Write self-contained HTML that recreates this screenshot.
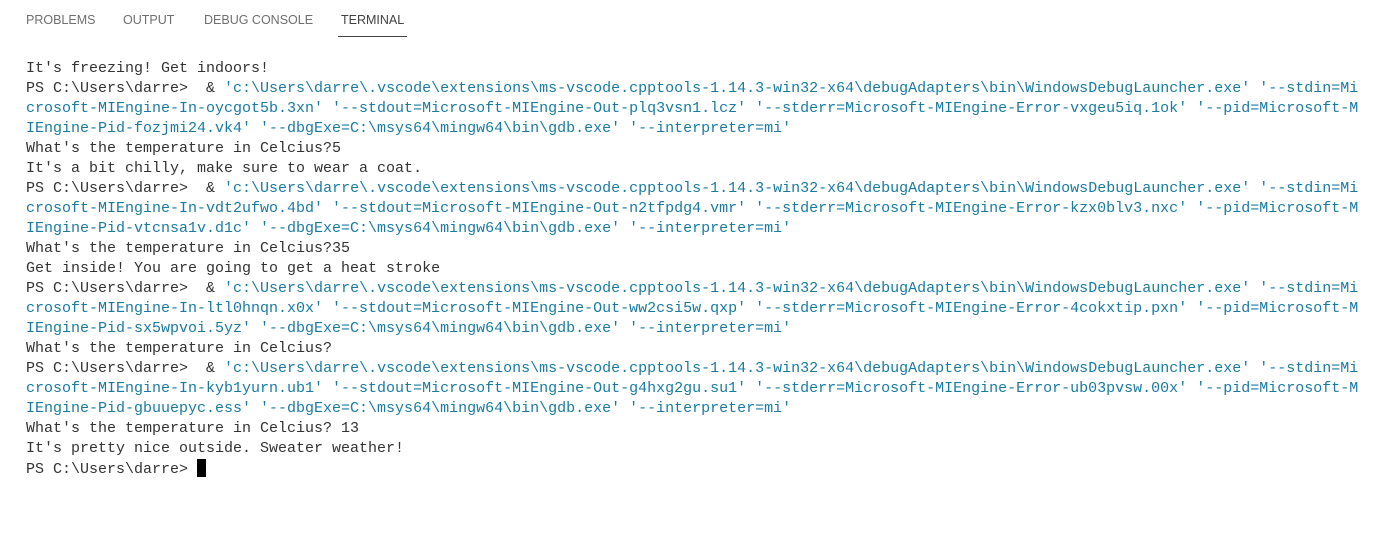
<!DOCTYPE html>
<html><head><meta charset="utf-8"><style>
body{margin:0;width:1375px;height:554px;background:#fff;overflow:hidden}
.tabs{position:absolute;top:0;left:26px;height:40px;font:12.5px "Liberation Sans",sans-serif;color:#6f6f6f}
.tab{position:absolute;top:13px;white-space:nowrap}
.tab.act{color:#424242}
.ul{position:absolute;left:338px;top:36px;width:69px;height:1px;background:#424242}
pre{position:absolute;left:26px;top:59px;margin:0;font:15px/20px "Liberation Mono",monospace;color:#333}
.s{color:#1a7ba0}
.cur{display:inline-block;width:9px;height:18px;background:#000;vertical-align:-4px}
</style></head><body>
<div class="tabs">
<span class="tab" style="left:0">PROBLEMS</span>
<span class="tab" style="left:97px">OUTPUT</span>
<span class="tab" style="left:178px">DEBUG CONSOLE</span>
<span class="tab act" style="left:315px">TERMINAL</span>
</div>
<div class="ul"></div>
<pre>It's freezing! Get indoors!
PS C:\Users\darre>  &amp; <span class="s">'c:\Users\darre\.vscode\extensions\ms-vscode.cpptools-1.14.3-win32-x64\debugAdapters\bin\WindowsDebugLauncher.exe' '--stdin=Mi
crosoft-MIEngine-In-oycgot5b.3xn' '--stdout=Microsoft-MIEngine-Out-plq3vsn1.lcz' '--stderr=Microsoft-MIEngine-Error-vxgeu5iq.1ok' '--pid=Microsoft-M
IEngine-Pid-fozjmi24.vk4' '--dbgExe=C:\msys64\mingw64\bin\gdb.exe' '--interpreter=mi'</span>
What's the temperature in Celcius?5
It's a bit chilly, make sure to wear a coat.
PS C:\Users\darre>  &amp; <span class="s">'c:\Users\darre\.vscode\extensions\ms-vscode.cpptools-1.14.3-win32-x64\debugAdapters\bin\WindowsDebugLauncher.exe' '--stdin=Mi
crosoft-MIEngine-In-vdt2ufwo.4bd' '--stdout=Microsoft-MIEngine-Out-n2tfpdg4.vmr' '--stderr=Microsoft-MIEngine-Error-kzx0blv3.nxc' '--pid=Microsoft-M
IEngine-Pid-vtcnsa1v.d1c' '--dbgExe=C:\msys64\mingw64\bin\gdb.exe' '--interpreter=mi'</span>
What's the temperature in Celcius?35
Get inside! You are going to get a heat stroke
PS C:\Users\darre>  &amp; <span class="s">'c:\Users\darre\.vscode\extensions\ms-vscode.cpptools-1.14.3-win32-x64\debugAdapters\bin\WindowsDebugLauncher.exe' '--stdin=Mi
crosoft-MIEngine-In-ltl0hnqn.x0x' '--stdout=Microsoft-MIEngine-Out-ww2csi5w.qxp' '--stderr=Microsoft-MIEngine-Error-4cokxtip.pxn' '--pid=Microsoft-M
IEngine-Pid-sx5wpvoi.5yz' '--dbgExe=C:\msys64\mingw64\bin\gdb.exe' '--interpreter=mi'</span>
What's the temperature in Celcius?
PS C:\Users\darre>  &amp; <span class="s">'c:\Users\darre\.vscode\extensions\ms-vscode.cpptools-1.14.3-win32-x64\debugAdapters\bin\WindowsDebugLauncher.exe' '--stdin=Mi
crosoft-MIEngine-In-kyb1yurn.ub1' '--stdout=Microsoft-MIEngine-Out-g4hxg2gu.su1' '--stderr=Microsoft-MIEngine-Error-ub03pvsw.00x' '--pid=Microsoft-M
IEngine-Pid-gbuuepyc.ess' '--dbgExe=C:\msys64\mingw64\bin\gdb.exe' '--interpreter=mi'</span>
What's the temperature in Celcius? 13
It's pretty nice outside. Sweater weather!
PS C:\Users\darre> <span class="cur"></span></pre>
</body></html>
